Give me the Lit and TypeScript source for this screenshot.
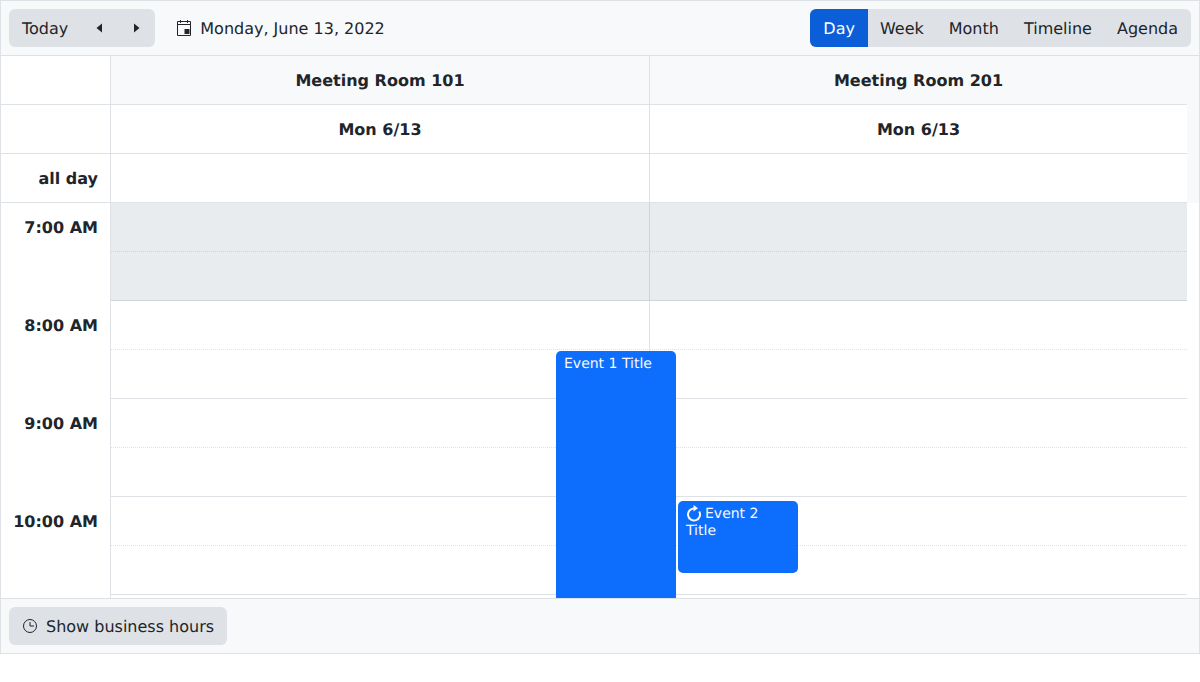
import { LitElement, html, css, svg } from 'lit';
import { customElement } from 'lit/decorators.js';

const caretLeft = svg`<polygon points="0.5,5 6,0.5 6,9.5"/>`;
const caretRight = svg`<polygon points="6.5,5 1,0.5 1,9.5"/>`;

@customElement('app-root')
export class AppRoot extends LitElement {
    static styles = css`
        :host {
            display: block;
            font-family: "DejaVu Sans", sans-serif;
            text-rendering: geometricPrecision;
            font-size: 16px;
            line-height: 24px;
            color: #212529;
        }

        .scheduler {
            width: 1200px;
            height: 654px;
            box-sizing: border-box;
            border: 1px solid #dee2e6;
            display: flex;
            flex-direction: column;
            background: white;
        }

        .toolbar {
            height: 55px;
            flex: none;
            box-sizing: border-box;
            border-bottom: 1px solid #dee2e6;
            background: #f8f9fa;
            padding: 8px;
            display: flex;
            align-items: flex-start;
        }

        .group {
            display: flex;
            height: 38px;
            border-radius: 6px;
            background: #dee2e6;
            overflow: hidden;
        }

        .btn {
            padding: 8px 13px 6px;
            display: flex;
            align-items: center;
            gap: 9px;
            white-space: nowrap;
        }

        .views .btn + .btn {
            margin-left: -1px;
        }

        .btn.active {
            background: #0b5ed7;
            color: white;
        }

        .arrow {
            width: 37px;
            display: flex;
            align-items: center;
            justify-content: center;
        }

        .arrow svg {
            width: 7px;
            height: 10px;
            fill: #212529;
        }

        .date {
            margin-left: 22px;
            height: 38px;
            box-sizing: border-box;
            padding-top: 2px;
            display: flex;
            align-items: center;
            gap: 9px;
        }

        .date svg {
            margin-top: -2px;
        }

        .views {
            margin-left: auto;
        }

        .body {
            flex: 1;
            min-height: 0;
            overflow: hidden;
        }

        .row {
            display: grid;
            grid-template-columns: 110px 539px 537px 12px;
        }

        .row > div {
            box-sizing: border-box;
            height: 49px;
            padding: 13px 12px 11px;
            font-weight: 700;
            text-align: center;
            border-bottom: 1px solid #dee2e6;
        }

        .row > .gutter {
            border-right: 1px solid #dee2e6;
            text-align: right;
        }

        .row > .col {
            border-right: 1px solid #dee2e6;
        }

        .row > .strip {
            padding: 0;
            border-bottom: none;
            background: #f8f9fa;
        }

        .rooms .col,
        .rooms .last {
            background: #f8f9fa;
        }

        .times {
            display: grid;
            grid-template-columns: 110px 1076px;
        }

        .labels {
            border-right: 1px solid #dee2e6;
        }

        .label {
            box-sizing: border-box;
            height: 98px;
            padding: 13px 12px 11px;
            font-weight: 700;
            text-align: right;
        }

        .grid {
            position: relative;
        }

        .slot {
            display: grid;
            grid-template-columns: 539px 537px;
            height: 49px;
        }

        .slot > div {
            box-sizing: border-box;
            border-bottom: 1px dotted #dee2e6;
        }

        .slot > div:first-child {
            border-right: 1px solid #dee2e6;
        }

        .slot.full > div {
            border-bottom: 1px solid #dee2e6;
        }

        .slot.closed > div {
            background: #e9ecef;
            border-bottom-color: #ced4da;
        }

        .slot.closed > div:first-child {
            border-right-color: #ced4da;
        }

        .event {
            position: absolute;
            width: 120px;
            box-sizing: border-box;
            padding: 4px 8px;
            border-radius: 5px;
            background: #0d6efd;
            color: #f8f9fa;
            font-size: 14px;
            line-height: 17px;
        }

        .event1 {
            left: 445px;
            top: 148px;
            height: 300px;
            padding-top: 5px;
        }

        .event2 {
            left: 567px;
            top: 298px;
            height: 72px;
        }

        .event svg {
            width: 16px;
            height: 17px;
            fill: none;
            stroke: currentColor;
            stroke-width: 2;
            vertical-align: -4px;
            margin-right: 3px;
        }

        .event svg polygon {
            fill: currentColor;
            stroke: none;
        }

        .footer {
            height: 55px;
            flex: none;
            box-sizing: border-box;
            border-top: 1px solid #dee2e6;
            background: #f8f9fa;
            padding: 8px;
        }

        .footer .group {
            display: inline-flex;
        }

        .footer svg {
            margin-left: 1px;
            margin-top: -2px;
        }
    `;

    renderSlots() {
        const slots = [];
        for (let i = 0; i < 10; i++) {
            const full = i % 2 === 1;
            const closed = i < 2;
            slots.push(html`<div class="slot ${full ? 'full' : ''} ${closed ? 'closed' : ''}"><div></div><div></div></div>`);
        }
        return slots;
    }

    render() {
        return html`
            <div class="scheduler">
                <div class="toolbar">
                    <div class="group">
                        <div class="btn">Today</div>
                        <div class="arrow"><svg viewBox="0 0 7 10">${caretLeft}</svg></div>
                        <div class="arrow"><svg viewBox="0 0 7 10">${caretRight}</svg></div>
                    </div>
                    <div class="date">
                        <svg width="14" height="16" viewBox="0 0 14 16" fill="none" stroke="#212529">
                            <path d="M.5 1.5h13v14H.5zM.5 4.5h13M3.5 0v3M10.5 0v3"/>
                            <rect x="7.5" y="9" width="5" height="5" fill="#212529" stroke="none"/>
                        </svg>
                        <span>Monday, June 13, 2022</span>
                    </div>
                    <div class="group views">
                        <div class="btn active">Day</div>
                        <div class="btn">Week</div>
                        <div class="btn">Month</div>
                        <div class="btn">Timeline</div>
                        <div class="btn">Agenda</div>
                    </div>
                </div>
                <div class="body">
                    <div class="row rooms">
                        <div class="gutter"></div>
                        <div class="col">Meeting Room 101</div>
                        <div class="last">Meeting Room 201</div>
                        <div class="strip"></div>
                    </div>
                    <div class="row">
                        <div class="gutter"></div>
                        <div class="col">Mon 6/13</div>
                        <div class="last">Mon 6/13</div>
                        <div class="strip"></div>
                    </div>
                    <div class="row">
                        <div class="gutter">all day</div>
                        <div class="col"></div>
                        <div class="last"></div>
                        <div class="strip"></div>
                    </div>
                    <div class="times">
                        <div class="labels">
                            <div class="label">7:00 AM</div>
                            <div class="label">8:00 AM</div>
                            <div class="label">9:00 AM</div>
                            <div class="label">10:00 AM</div>
                        </div>
                        <div class="grid">
                            ${this.renderSlots()}
                            <div class="event event1">Event 1 Title</div>
                            <div class="event event2">
                                <svg viewBox="0 0 16 17">
                                    <path d="M8 3.5a6 6 0 1 0 5.2 3"/>
                                    <polygon points="7.5,0 7.5,6.5 12,3.2"/>
                                </svg>Event 2 Title
                            </div>
                        </div>
                    </div>
                </div>
                <div class="footer">
                    <div class="group">
                        <div class="btn">
                            <svg width="14" height="14" viewBox="0 0 14 14" fill="none" stroke="#212529">
                                <circle cx="7" cy="7" r="6.5"/>
                                <path d="M7 3v4h4"/>
                            </svg>
                            <span>Show business hours</span>
                        </div>
                    </div>
                </div>
            </div>
        `;
    }
}
